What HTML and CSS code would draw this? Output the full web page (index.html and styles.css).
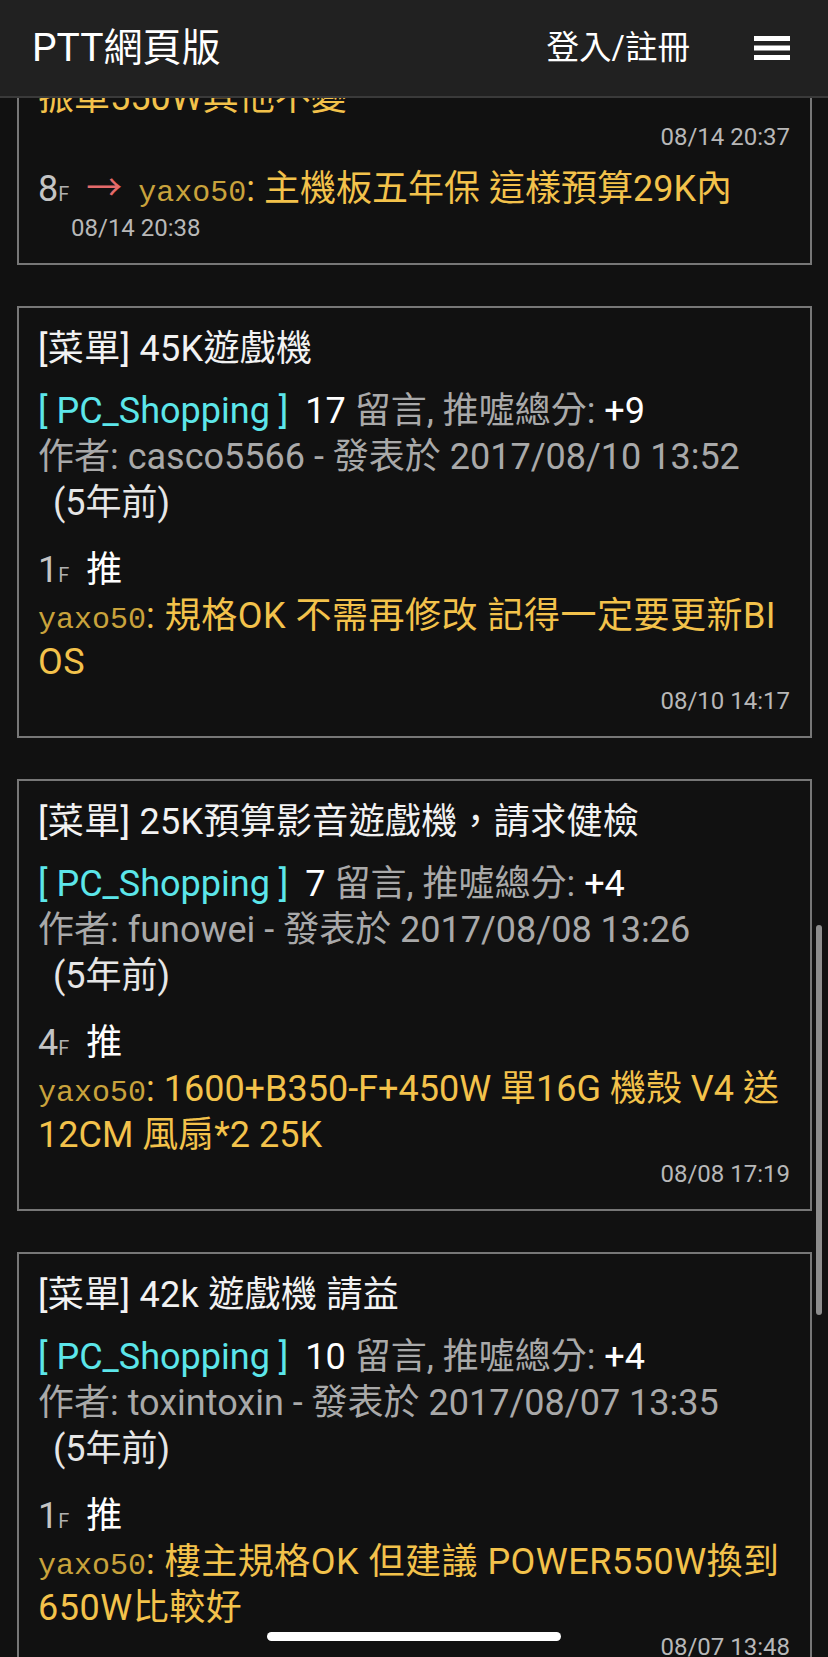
FILE: index.html
```html
<!DOCTYPE html>
<html lang="zh-Hant">
<head>
<meta charset="utf-8">
<title>PTT網頁版</title>
<link rel="stylesheet" href="styles.css">
</head>
<body>
<header class="topbar">
  <div class="brand">PTT網頁版</div>
  <div class="actions">
    <span class="login">登入/註冊</span>
    <svg class="menu" width="36" height="24" viewBox="0 0 36 24" aria-hidden="true">
      <rect x="0" y="0" width="36" height="5" fill="#fff"/>
      <rect x="0" y="9.5" width="36" height="5" fill="#fff"/>
      <rect x="0" y="19" width="36" height="5" fill="#fff"/>
    </svg>
  </div>
</header>

<main class="list">
  <article class="card">
    <div class="comment">
      <div class="msg">振單550W其他不變</div>
      <div class="time right">08/14 20:37</div>
    </div>
    <div class="comment spaced">
      <div class="msg"><span class="floor">8<small>F</small></span><span class="arrow">→</span><span class="user">yaxo50</span>: 主機板五年保 這樣預算29K內</div>
      <div class="time indent">08/14 20:38</div>
    </div>
  </article>

  <article class="card">
    <h2 class="title">[菜單] 45K遊戲機</h2>
    <div class="meta"><span class="board">[ PC_Shopping ]</span> <span class="hi">17</span> 留言, 推噓總分: <span class="hi">+9</span></div>
    <div class="meta">作者: casco5566 - 發表於 2017/08/10 13:52</div>
    <div class="ago">(5年前)</div>
    <div class="first">
      <div class="floor-row"><span class="floor">1<small>F</small></span><span class="tag">推</span></div>
      <div class="msg wide break"><span class="user">yaxo50</span>: 規格OK 不需再修改 記得一定要更新BIOS</div>
      <div class="time right">08/10 14:17</div>
    </div>
  </article>

  <article class="card">
    <h2 class="title">[菜單] 25K預算影音遊戲機，請求健檢</h2>
    <div class="meta"><span class="board">[ PC_Shopping ]</span> <span class="hi">7</span> 留言, 推噓總分: <span class="hi">+4</span></div>
    <div class="meta">作者: funowei - 發表於 2017/08/08 13:26</div>
    <div class="ago">(5年前)</div>
    <div class="first">
      <div class="floor-row"><span class="floor">4<small>F</small></span><span class="tag">推</span></div>
      <div class="msg"><span class="user">yaxo50</span>: 1600+B350-F+450W 單16G 機殼 V4 送 12CM 風扇*2 25K</div>
      <div class="time right">08/08 17:19</div>
    </div>
  </article>

  <article class="card">
    <h2 class="title">[菜單] 42k 遊戲機 請益</h2>
    <div class="meta"><span class="board">[ PC_Shopping ]</span> <span class="hi">10</span> 留言, 推噓總分: <span class="hi">+4</span></div>
    <div class="meta">作者: toxintoxin - 發表於 2017/08/07 13:35</div>
    <div class="ago">(5年前)</div>
    <div class="first">
      <div class="floor-row"><span class="floor">1<small>F</small></span><span class="tag">推</span></div>
      <div class="msg wide"><span class="user">yaxo50</span>: 樓主規格OK 但建議 POWER550W換到650W比較好</div>
      <div class="time right">08/07 13:48</div>
    </div>
  </article>
</main>

<div class="scrollbar"></div>
<div class="home-indicator"></div>
</body>
</html>
```

FILE: styles.css
```css
html, body {
  margin: 0;
  padding: 0;
}

body {
  background: #111111;
  color: #ffffff;
  font-family: Roboto, "Noto Sans CJK TC", sans-serif;
  height: 1657px;
  overflow: hidden;
}

.topbar {
  position: fixed;
  top: 0;
  left: 0;
  right: 0;
  height: 96px;
  z-index: 10;
  background: #212121;
  border-bottom: 2px solid #3a3a3a;
  display: flex;
  align-items: center;
  justify-content: space-between;
  padding: 0 38px 0 32px;
}

.brand {
  font-size: 39px;
  line-height: 1;
  color: #ffffff;
}

.actions {
  display: flex;
  align-items: center;
  gap: 64px;
}

.login {
  font-size: 32.5px;
  line-height: 1;
  color: #ffffff;
}

.menu {
  display: block;
}

.list {
  padding-top: 55px;
}

.card {
  margin: 0 16px 41px 17px;
  border: 2px solid #777777;
  padding: 18px 20px 19px 19px;
  font-size: 36px;
  line-height: 46px;
}

.title {
  margin: 0 0 16px;
  font-size: 36px;
  font-weight: normal;
  line-height: 46px;
  letter-spacing: 0.3px;
  color: #f2f2f2;
}

.meta {
  color: #a9a9a9;
}

.board {
  color: #5ce6ea;
  margin-right: 8px;
}

.hi {
  color: #ffffff;
}

.ago {
  padding-left: 15px;
  color: #e6e6e6;
}

.first {
  margin-top: 21px;
}

.comment.spaced {
  margin-top: 13px;
}

.floor {
  color: #c4c4c4;
  margin-right: 17px;
}

.floor small {
  font-size: 20px;
  line-height: 1;
  color: #b0b0b0;
}

.tag {
  color: #ffffff;
}

.arrow {
  color: #e46a6a;
  margin-right: 16px;
  line-height: 1;
  font-family: "Noto Sans CJK TC", sans-serif;
}

.msg {
  color: #f3c24b;
  overflow-wrap: anywhere;
}

.msg.wide {
  letter-spacing: 0.5px;
}

.msg.break {
  word-break: break-all;
}

.user {
  font-family: "Liberation Mono", monospace;
  font-size: 30px;
  line-height: 1;
  letter-spacing: 0;
  color: #c9a33c;
}

.time {
  font-size: 24px;
  line-height: 32px;
  color: #b8b8b8;
}

.time.right {
  text-align: right;
}

.time.indent {
  padding-left: 33px;
}

.scrollbar {
  position: fixed;
  top: 925px;
  right: 6px;
  width: 6px;
  height: 390px;
  border-radius: 3px;
  background: #8c8c8c;
}

.home-indicator {
  position: fixed;
  left: 267px;
  bottom: 16px;
  width: 294px;
  height: 9px;
  border-radius: 5px;
  background: #ffffff;
}
```
